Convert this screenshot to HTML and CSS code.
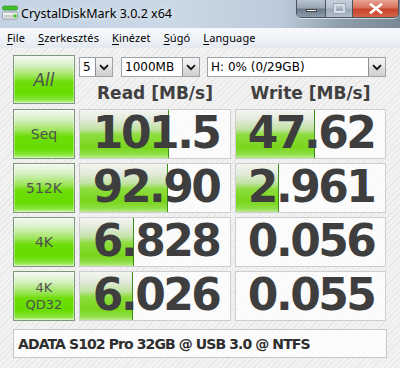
FILE: index.html
```html
<!DOCTYPE html>
<html>
<head>
<meta charset="utf-8">
<link rel="stylesheet" href="styles.css">
</head>
<body>
<div class="window">
  <div class="titlebar">
    <svg class="appicon" width="17" height="17" viewBox="0 0 17 17">
      <rect x="0.5" y="1" width="15" height="4" rx="1.5" fill="#3fbf2a" stroke="#2a8a1c" stroke-width="0.6"/>
      <rect x="0.5" y="7" width="15" height="7" rx="1.5" fill="#eef0f0" stroke="#8a9090" stroke-width="0.8"/>
      <rect x="2" y="10" width="9" height="2.5" fill="#c8cccc"/>
      <rect x="11.5" y="9.5" width="3" height="3" fill="#39c21e"/>
    </svg>
    <span class="title">CrystalDiskMark 3.0.2 x64</span>
    <div class="controls">
      <div class="ctl min"><span class="dash"></span></div>
      <div class="ctl max"><span class="sq"></span></div>
      <div class="ctl close">
        <svg width="14" height="11" viewBox="0 0 14 11"><path d="M2 1.5 L12 9.5 M12 1.5 L2 9.5" stroke="#ffffff" stroke-width="2.6" stroke-linecap="square"/></svg>
      </div>
    </div>
  </div>
  <div class="menubar">
    <span class="mi"><u>F</u>ile</span>
    <span class="mi"><u>S</u>zerkesztés</span>
    <span class="mi"><u>K</u>inézet</span>
    <span class="mi"><u>S</u>úgó</span>
    <span class="mi"><u>L</u>anguage</span>
  </div>
  <div class="client">
    <div class="btn all">All</div>
    <div class="head">
      <div class="selects">
        <div class="combo c1"><span class="val">5</span><span class="arrow"><svg width="10" height="7" viewBox="0 0 10 7"><path d="M1 1.2 L5 5.2 L9 1.2" fill="none" stroke="#111" stroke-width="1.8"/></svg></span></div>
        <div class="combo c2"><span class="val">1000MB</span><span class="arrow"><svg width="10" height="7" viewBox="0 0 10 7"><path d="M1 1.2 L5 5.2 L9 1.2" fill="none" stroke="#111" stroke-width="1.8"/></svg></span></div>
        <div class="combo c3"><span class="val">H: 0% (0/29GB)</span><span class="arrow"><svg width="10" height="7" viewBox="0 0 10 7"><path d="M1 1.2 L5 5.2 L9 1.2" fill="none" stroke="#111" stroke-width="1.8"/></svg></span></div>
      </div>
      <div class="colheads">
        <div class="ch">Read [MB/s]</div>
        <div class="ch">Write [MB/s]</div>
      </div>
    </div>

    <div class="btn seq">Seq</div>
    <div class="cell"><div class="bar" style="width:89px"></div><span class="num">101.5</span></div>
    <div class="cell"><div class="bar" style="width:79px"></div><span class="num">47.62</span></div>

    <div class="btn k512">512K</div>
    <div class="cell"><div class="bar" style="width:88px"></div><span class="num">92.90</span></div>
    <div class="cell"><div class="bar" style="width:43px"></div><span class="num">2.961</span></div>

    <div class="btn k4">4K</div>
    <div class="cell"><div class="bar" style="width:54px"></div><span class="num">6.828</span></div>
    <div class="cell"><span class="num">0.056</span></div>

    <div class="btn qd">4K<br>QD32</div>
    <div class="cell"><div class="bar" style="width:53px"></div><span class="num">6.026</span></div>
    <div class="cell"><span class="num">0.055</span></div>

    <div class="footer">ADATA S102 Pro 32GB @ USB 3.0 @ NTFS</div>
  </div>
</div>
</body>
</html>
```
FILE: styles.css
```css
* { box-sizing: border-box; }
html, body { margin: 0; padding: 0; }
body { width: 400px; height: 368px; overflow: hidden; background: #f0f0f0; }

.window { width: 400px; height: 368px; display: flex; flex-direction: column; }

.titlebar {
  height: 28px;
  display: flex;
  align-items: flex-start;
  background: linear-gradient(to right, #c3d3e3 0%, #cad8e6 45%, #bccbd9 70%, #8f9eab 85%, #7a8895 100%);
}
.appicon { margin: 5px 0 0 2px; flex: none; }
.title {
  font-family: "Noto Sans", sans-serif;
  font-size: 12.5px;
  color: #000;
  margin: 6px 0 0 2px;
  line-height: 16px;
  text-shadow: 0 0 6px rgba(255,255,255,0.9);
}
.controls {
  margin-left: auto;
  margin-right: 1px;
  display: flex;
  height: 18px;
  border: 1px solid #4a5560;
  border-top: none;
  border-radius: 0 0 5px 5px;
  overflow: hidden;
  box-shadow: 0 1px 0 rgba(255,255,255,0.6);
}
.ctl { height: 17px; display: flex; align-items: center; justify-content: center; }
.min {
  width: 29px;
  background: linear-gradient(to bottom, #b8c4d0 0%, #9aa8b6 45%, #6b7a89 55%, #8d9cab 100%);
  border-right: 1px solid #4a5560;
}
.dash { width: 11px; height: 3px; background: #fff; border: 1px solid #444; margin-top: 4px; }
.max {
  width: 27px;
  background: linear-gradient(to bottom, #c5d0db 0%, #b3c0cc 45%, #9aa8b6 55%, #b0bdca 100%);
  border-right: 1px solid #4a5560;
}
.sq { width: 11px; height: 9px; border: 2px solid #d8dee5; outline: 1px solid #9aa6b2; }
.close {
  width: 45px;
  background: linear-gradient(to bottom, #e8a493 0%, #d7735c 45%, #c7432a 55%, #d4654a 100%);
}

.menubar {
  height: 20px;
  display: flex;
  align-items: center;
  padding-left: 7px;
  background: linear-gradient(to bottom, #f7f9fc 0%, #eef2f7 60%, #e4e9f0 100%);
  border-bottom: 1px solid #e6e9ee;
  font-family: "Noto Sans", sans-serif;
  font-size: 11px;
  color: #000;
}
.mi { margin-right: 13px; letter-spacing: 0.1px; }
.mi u { text-decoration-thickness: 1px; text-underline-offset: 2px; }

.client {
  flex: 1;
  display: grid;
  grid-template-columns: 62px 152px 151px;
  grid-template-rows: 50px 50px 50px 50px 50px 29px;
  column-gap: 4px;
  row-gap: 4px;
  padding: 7px 0 0 13px;
  background-color: #f2f2f2;
  background-image: repeating-linear-gradient(-45deg, rgba(255,255,255,0.0) 0 3px, rgba(210,210,210,0.35) 3px 4px);
  align-content: start;
}

.btn {
  border: 1px solid #7d977d;
  background: linear-gradient(to bottom, #f5f9f2 0%, #d6f1c2 20%, #9fe55e 42%, #6ddd08 55%, #66dc00 80%, #88e63c 93%, #c4f39c 100%);
  display: flex;
  align-items: center;
  justify-content: center;
  text-align: center;
  color: #505050;
  font-family: "DejaVu Sans", sans-serif;
  box-shadow: inset 0 0 0 1px rgba(255,255,255,0.35);
}
.all { height: 49px; font-size: 17px; font-style: italic; }
.seq { font-size: 14px; }
.k512 { font-size: 14px; }
.k4 { font-size: 14px; }
.qd { font-size: 13px; line-height: 17px; }

.head { grid-column: 2 / 4; display: flex; flex-direction: column; }
.selects { display: flex; margin-top: 2px; height: 20px; }
.combo {
  height: 20px;
  border: 1px solid #9da3aa;
  background: #fff;
  display: flex;
  align-items: center;
  font-family: "DejaVu Sans", sans-serif;
  font-size: 12px;
  color: #000;
}
.combo .val { flex: 1; padding-left: 3px; white-space: nowrap; }
.combo .arrow {
  width: 17px;
  height: 18px;
  border-left: 1px solid #8d9197;
  background: linear-gradient(to bottom, #f2f2f2 0%, #ebebeb 45%, #dddddd 55%, #cfcfcf 100%);
  display: flex;
  align-items: center;
  justify-content: center;
}
.c1 { width: 34px; }
.c2 { width: 79px; margin-left: 8px; }
.c3 { width: 179px; margin-left: 7px; }

.colheads { display: grid; grid-template-columns: 152px 151px; column-gap: 4px; margin-top: 5px; }
.ch {
  text-align: center;
  font-family: "DejaVu Sans", sans-serif;
  font-weight: bold;
  font-size: 17px;
  color: #404040;
  line-height: 22px;
}

.cell {
  position: relative;
  border: 1px solid #cdcdcd;
  background-color: rgba(255,255,255,0.72);
  display: flex;
  align-items: center;
  justify-content: flex-end;
  padding-right: 8px;
}
.bar {
  position: absolute;
  left: 0;
  top: 0;
  bottom: 0;
  background: linear-gradient(to bottom, #f3f5f1 0%, #e2eadb 20%, #c3e2a4 40%, #8ddc3c 52%, #7ad61c 78%, #8ede46 92%, #b9ec8c 100%);
  border-right: 1px solid #3c8e18;
}
.num {
  position: relative;
  font-family: "DejaVu Sans", sans-serif;
  font-weight: bold;
  font-size: 44px;
  letter-spacing: -2.5px;
  padding-right: 2.5px;
  color: #3e3e3e;
  line-height: 1;
  margin-top: -2px;
  white-space: nowrap;
}

.footer {
  grid-column: 1 / 4;
  margin-top: 4px;
  width: 374px;
  height: 29px;
  border: 1px solid #c6c6c6;
  background: rgba(255,255,255,0.75);
  display: flex;
  align-items: center;
  padding-left: 4px;
  font-family: "DejaVu Sans", sans-serif;
  font-weight: bold;
  font-size: 14px;
  letter-spacing: -0.9px;
  color: #2e2e2e;
}
```
